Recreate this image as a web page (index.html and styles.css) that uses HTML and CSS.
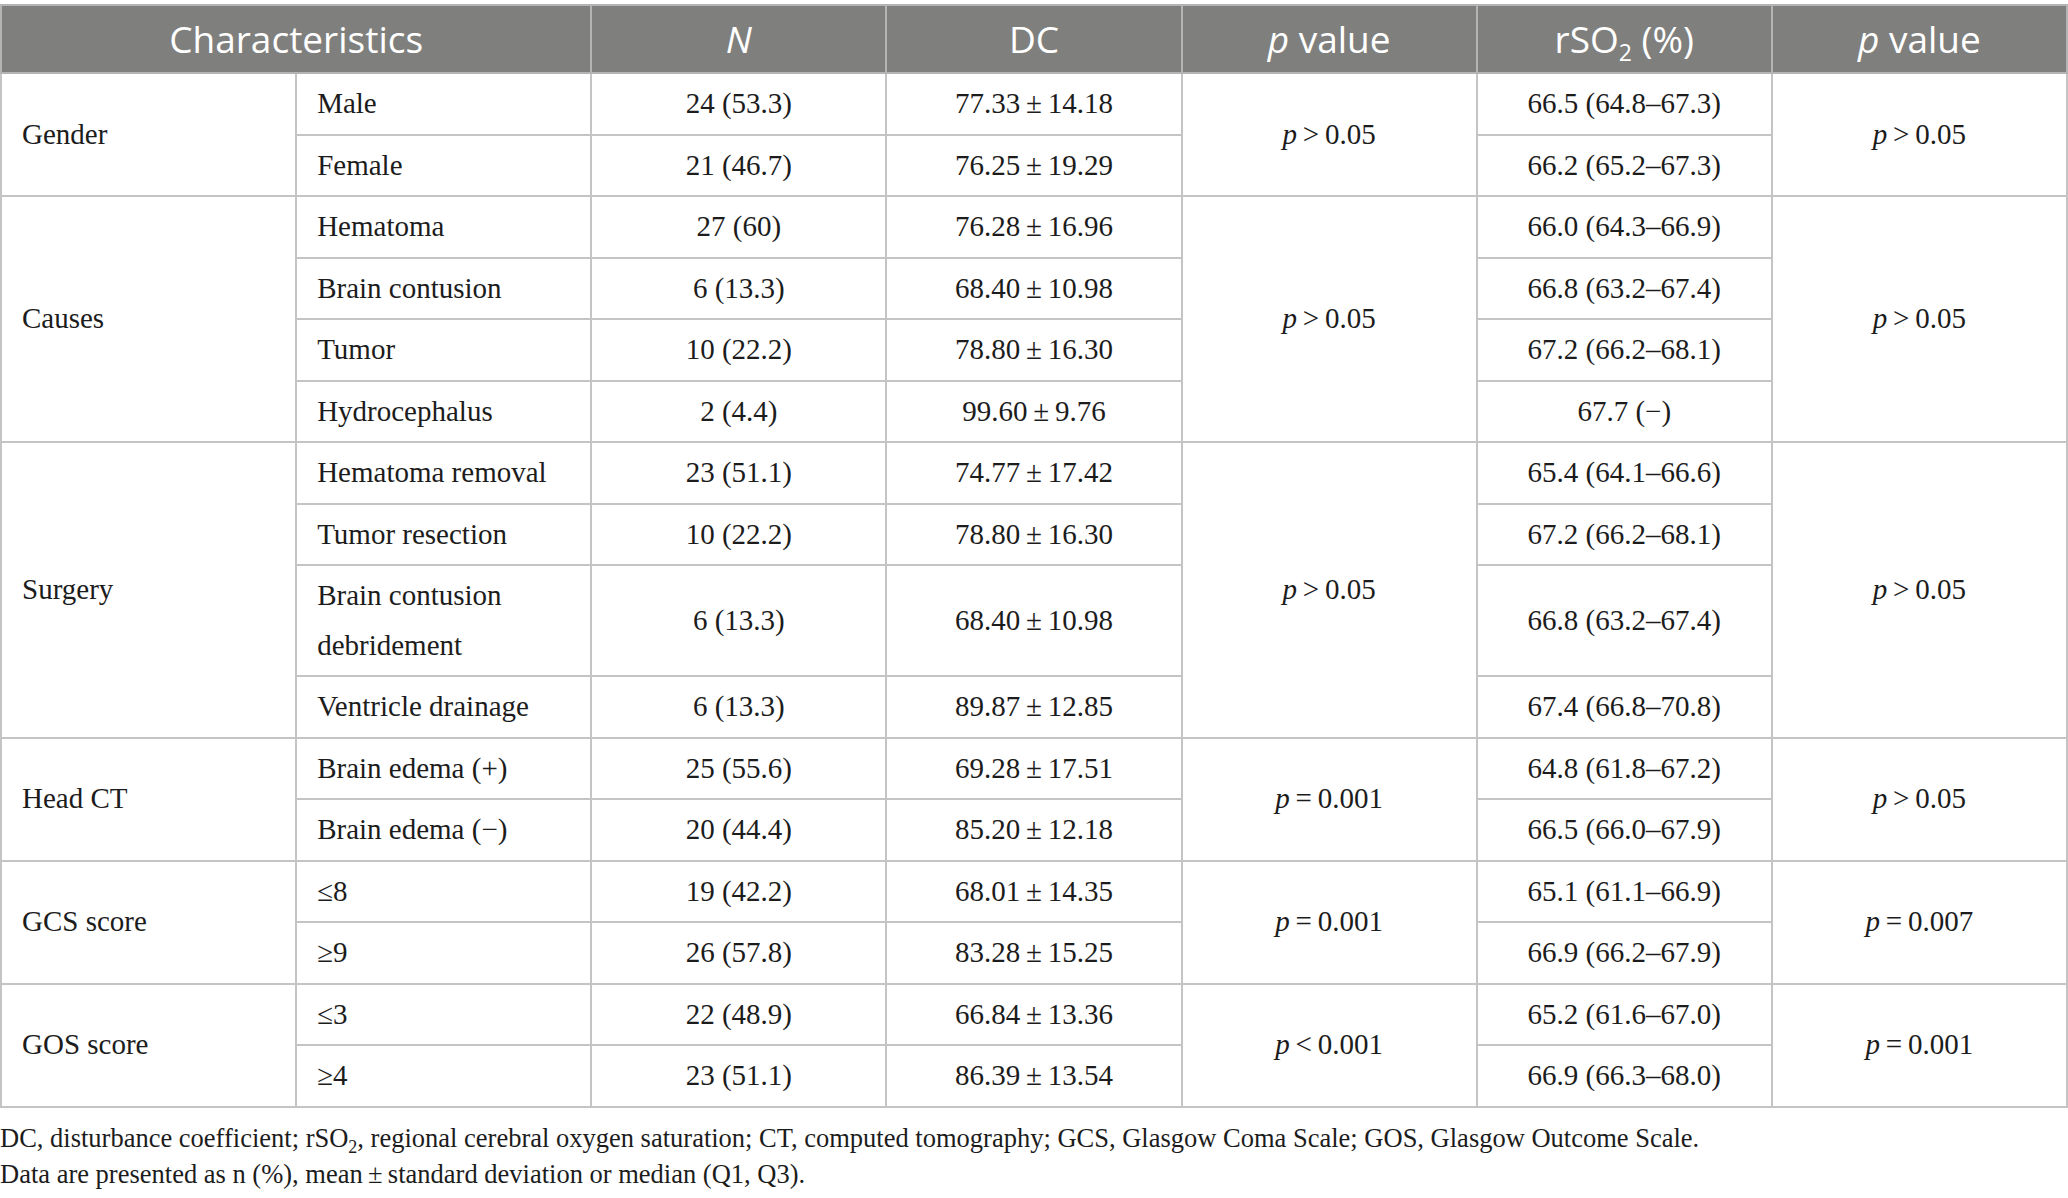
FILE: index.html
```html
<!DOCTYPE html>
<html lang="en">

<head>
    <meta charset="UTF-8">
    <title>Patient characteristics</title>
    <link rel="stylesheet" href="styles.css">
</head>

<body>
    <table class="data-table">
        <colgroup>
            <col><col><col><col><col><col><col>
        </colgroup>
        <thead>
            <tr>
                <th colspan="2">Characteristics</th>
                <th><i>N</i></th>
                <th>DC</th>
                <th><i>p</i> value</th>
                <th>rSO<sub>2</sub> (%)</th>
                <th><i>p</i> value</th>
            </tr>
        </thead>
        <tbody>
            <tr>
                <td class="group" rowspan="2">Gender</td>
                <td class="item">Male</td>
                <td>24 (53.3)</td>
                <td>77.33&thinsp;±&thinsp;14.18</td>
                <td rowspan="2"><i>p</i>&thinsp;&gt;&thinsp;0.05</td>
                <td>66.5 (64.8–67.3)</td>
                <td rowspan="2"><i>p</i>&thinsp;&gt;&thinsp;0.05</td>
            </tr>
            <tr>
                <td class="item">Female</td>
                <td>21 (46.7)</td>
                <td>76.25&thinsp;±&thinsp;19.29</td>
                <td>66.2 (65.2–67.3)</td>
            </tr>

            <tr>
                <td class="group" rowspan="4">Causes</td>
                <td class="item">Hematoma</td>
                <td>27 (60)</td>
                <td>76.28&thinsp;±&thinsp;16.96</td>
                <td rowspan="4"><i>p</i>&thinsp;&gt;&thinsp;0.05</td>
                <td>66.0 (64.3–66.9)</td>
                <td rowspan="4"><i>p</i>&thinsp;&gt;&thinsp;0.05</td>
            </tr>
            <tr>
                <td class="item">Brain contusion</td>
                <td>6 (13.3)</td>
                <td>68.40&thinsp;±&thinsp;10.98</td>
                <td>66.8 (63.2–67.4)</td>
            </tr>
            <tr>
                <td class="item">Tumor</td>
                <td>10 (22.2)</td>
                <td>78.80&thinsp;±&thinsp;16.30</td>
                <td>67.2 (66.2–68.1)</td>
            </tr>
            <tr>
                <td class="item">Hydrocephalus</td>
                <td>2 (4.4)</td>
                <td>99.60&thinsp;±&thinsp;9.76</td>
                <td>67.7 (−)</td>
            </tr>

            <tr>
                <td class="group" rowspan="4">Surgery</td>
                <td class="item">Hematoma removal</td>
                <td>23 (51.1)</td>
                <td>74.77&thinsp;±&thinsp;17.42</td>
                <td rowspan="4"><i>p</i>&thinsp;&gt;&thinsp;0.05</td>
                <td>65.4 (64.1–66.6)</td>
                <td rowspan="4"><i>p</i>&thinsp;&gt;&thinsp;0.05</td>
            </tr>
            <tr>
                <td class="item">Tumor resection</td>
                <td>10 (22.2)</td>
                <td>78.80&thinsp;±&thinsp;16.30</td>
                <td>67.2 (66.2–68.1)</td>
            </tr>
            <tr>
                <td class="item">Brain contusion<br>debridement</td>
                <td>6 (13.3)</td>
                <td>68.40&thinsp;±&thinsp;10.98</td>
                <td>66.8 (63.2–67.4)</td>
            </tr>
            <tr>
                <td class="item">Ventricle drainage</td>
                <td>6 (13.3)</td>
                <td>89.87&thinsp;±&thinsp;12.85</td>
                <td>67.4 (66.8–70.8)</td>
            </tr>

            <tr>
                <td class="group" rowspan="2">Head CT</td>
                <td class="item">Brain edema (+)</td>
                <td>25 (55.6)</td>
                <td>69.28&thinsp;±&thinsp;17.51</td>
                <td rowspan="2"><i>p</i>&thinsp;=&thinsp;0.001</td>
                <td>64.8 (61.8–67.2)</td>
                <td rowspan="2"><i>p</i>&thinsp;&gt;&thinsp;0.05</td>
            </tr>
            <tr>
                <td class="item">Brain edema (−)</td>
                <td>20 (44.4)</td>
                <td>85.20&thinsp;±&thinsp;12.18</td>
                <td>66.5 (66.0–67.9)</td>
            </tr>

            <tr>
                <td class="group" rowspan="2">GCS score</td>
                <td class="item">≤8</td>
                <td>19 (42.2)</td>
                <td>68.01&thinsp;±&thinsp;14.35</td>
                <td rowspan="2"><i>p</i>&thinsp;=&thinsp;0.001</td>
                <td>65.1 (61.1–66.9)</td>
                <td rowspan="2"><i>p</i>&thinsp;=&thinsp;0.007</td>
            </tr>
            <tr>
                <td class="item">≥9</td>
                <td>26 (57.8)</td>
                <td>83.28&thinsp;±&thinsp;15.25</td>
                <td>66.9 (66.2–67.9)</td>
            </tr>

            <tr>
                <td class="group" rowspan="2">GOS score</td>
                <td class="item">≤3</td>
                <td>22 (48.9)</td>
                <td>66.84&thinsp;±&thinsp;13.36</td>
                <td rowspan="2"><i>p</i>&thinsp;&lt;&thinsp;0.001</td>
                <td>65.2 (61.6–67.0)</td>
                <td rowspan="2"><i>p</i>&thinsp;=&thinsp;0.001</td>
            </tr>
            <tr>
                <td class="item">≥4</td>
                <td>23 (51.1)</td>
                <td>86.39&thinsp;±&thinsp;13.54</td>
                <td>66.9 (66.3–68.0)</td>
            </tr>
        </tbody>
    </table>

    <div class="notes">
        <p>DC, disturbance coefficient; rSO<sub>2</sub>, regional cerebral oxygen saturation; CT, computed tomography; GCS, Glasgow Coma Scale; GOS, Glasgow Outcome Scale.</p>
        <p>Data are presented as n (%), mean&thinsp;±&thinsp;standard deviation or median (Q1, Q3).</p>
    </div>
</body>

</html>
```

FILE: styles.css
```css
body {
    margin: 0;
    padding: 4px 0 0;
    background-color: #fff;
    color: #1c1c1c;
    font-family: "Liberation Serif", "Times New Roman", serif;
}

.data-table {
    width: 2068px;
    table-layout: fixed;
    border-collapse: collapse;
    border: 2px solid #c4c4c4;
}

.data-table col {
    width: 14.2857%;
}

.data-table th {
    background-color: #7f807e;
    color: #fff;
    font-family: "Open Sans", sans-serif;
    font-weight: normal;
    font-size: 37px;
    line-height: 48px;
    height: 66px;
    padding: 0 10px;
    text-align: center;
    border: 2px solid #b4b4b4;
}

.data-table th sub {
    font-size: 23px;
    line-height: 0;
}

.data-table td {
    font-size: 29px;
    line-height: 49.5px;
    padding: 5px 20px;
    text-align: center;
    vertical-align: middle;
    border: 2px solid #c4c4c4;
}

.data-table td.group,
.data-table td.item {
    text-align: left;
}

.notes {
    margin-top: 12px;
    font-size: 26.5px;
    line-height: 36px;
}

.notes p {
    margin: 0;
}

.notes sub {
    font-size: 18px;
    line-height: 0;
}
```
